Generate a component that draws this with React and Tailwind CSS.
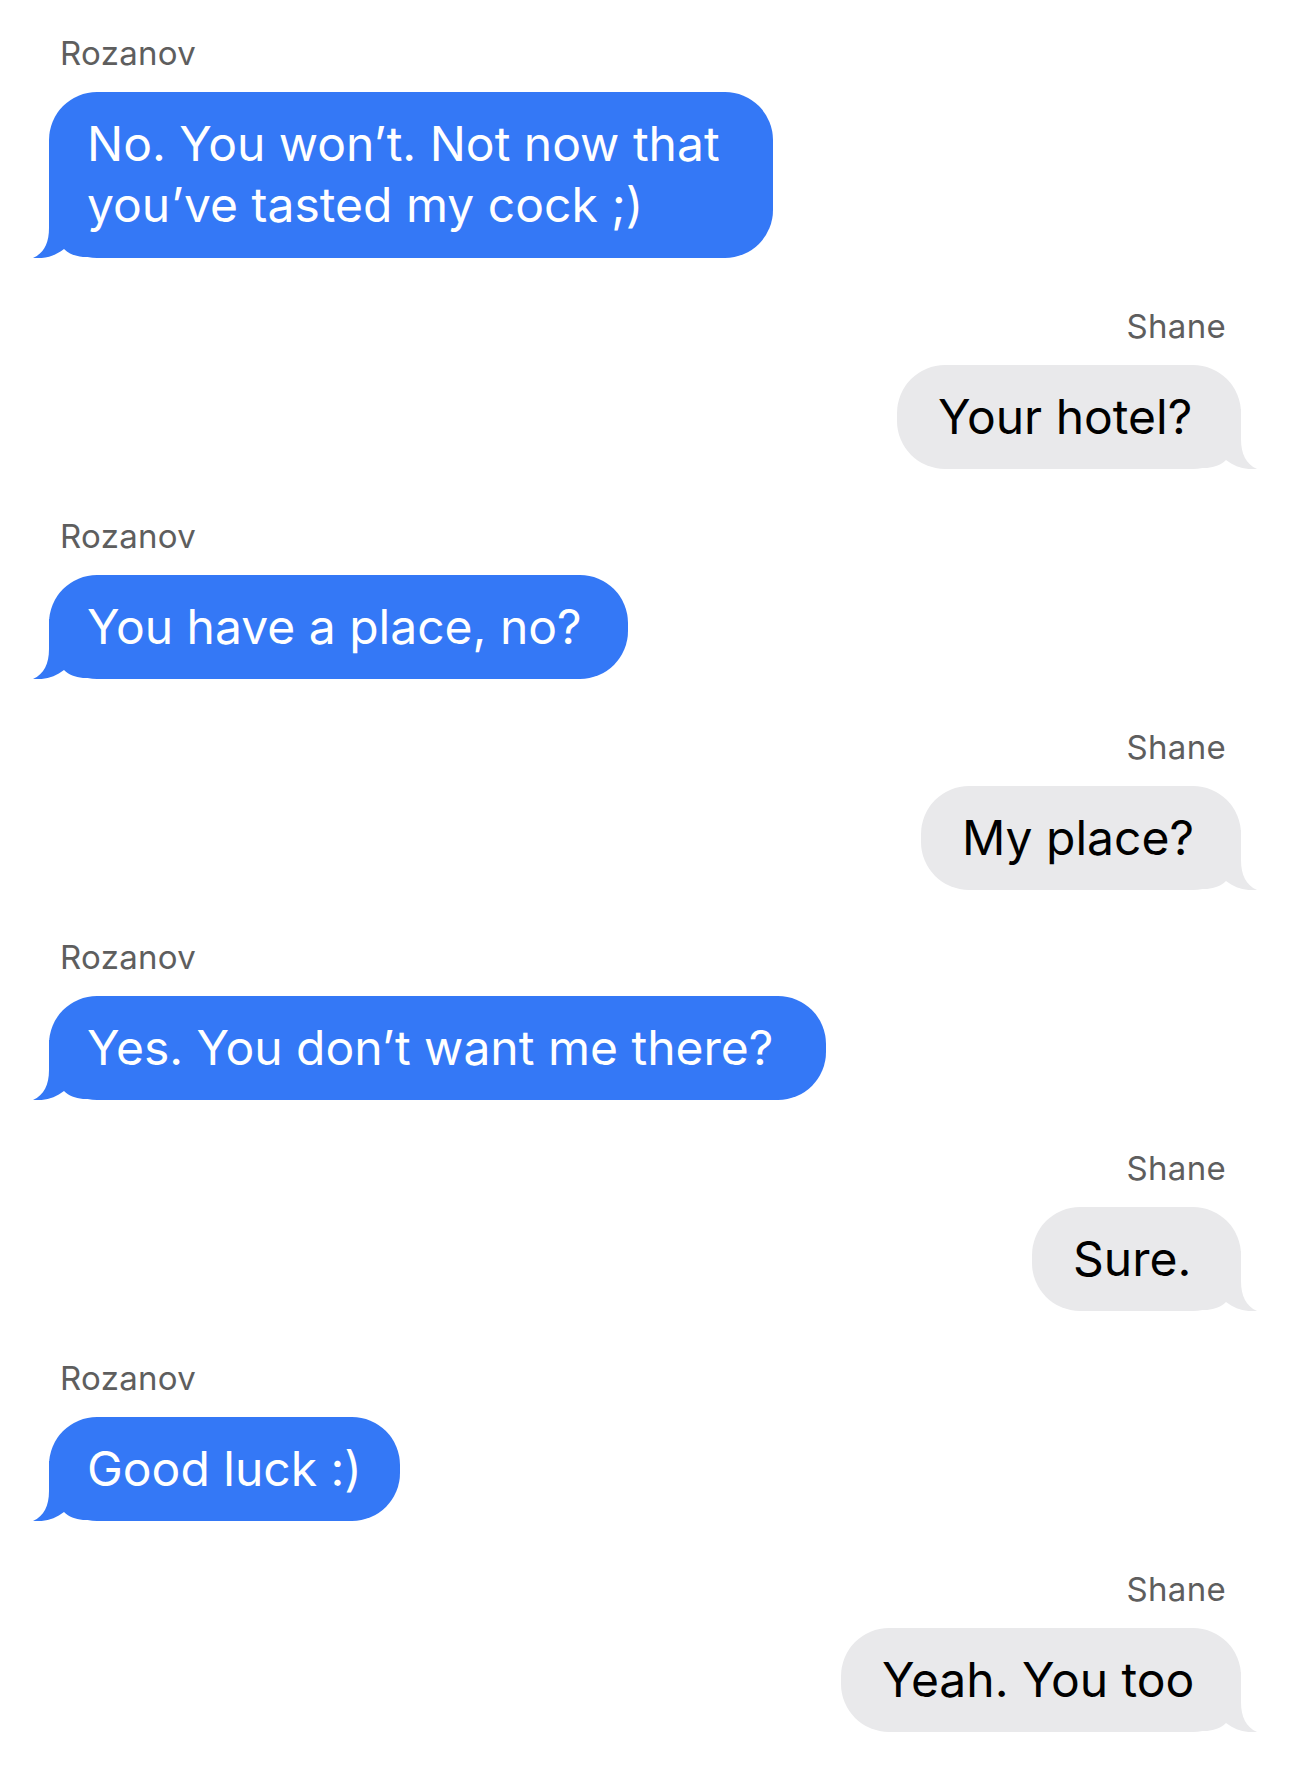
import React from "react";

const font = { fontFamily: "Inter, 'Noto Sans', 'Liberation Sans', sans-serif" };

function Tail({ side, color }) {
  if (side === "left") {
    return (
      <svg
        className="absolute left-[-16px] bottom-0 w-[60px] h-[60px]"
        viewBox="0 0 60 60"
      >
        <path
          d="M16 0 L16 30 C16 45 11 55 0 60 C12 61 22 58 31 51 C36 56 42 58 50 59 L60 59 L60 0 Z"
          fill={color}
        />
      </svg>
    );
  }
  return (
    <svg
      className="absolute right-[-16px] bottom-0 w-[60px] h-[60px]"
      viewBox="0 0 60 60"
    >
      <path
        d="M44 0 L44 30 C44 45 49 55 60 60 C48 61 38 58 29 51 C24 56 18 58 10 59 L0 59 L0 0 Z"
        fill={color}
      />
    </svg>
  );
}

function Group({ who, side, width, lines, first, tall }) {
  const left = side === "left";
  return (
    <div
      className={
        "flex flex-col " +
        (left ? "items-start " : "items-end ") +
        (first ? "" : "mt-[50.5px]")
      }
    >
      <div
        className={
          "text-[33px] leading-[34px] tracking-[0.3px] text-[#5e5e5e] " +
          (left ? "ml-[11px]" : "mr-[15px]")
        }
      >
        {who}
      </div>
      <div
        className={
          "relative mt-[22px] rounded-[48px] whitespace-nowrap text-[48px] leading-[61px] " +
          (left
            ? "bg-[#3478f6] text-white pl-[38px] "
            : "bg-[#e9e9eb] text-black pl-[41px] ") +
          (tall ? "pt-[21px] pb-[23px]" : "pt-[21px] pb-[22px]")
        }
        style={{ width }}
      >
        <Tail side={side} color={left ? "#3478f6" : "#e9e9eb"} />
        <div className="relative">
          {lines.map((l, i) => (
            <div key={i}>{l}</div>
          ))}
        </div>
      </div>
    </div>
  );
}

export default function App() {
  return (
    <div
      className="w-[1290px] min-h-[1781px] bg-white px-[49px] pt-[36px] pb-[49px] flex flex-col"
      style={font}
    >
      <Group
        first
        tall
        who="Rozanov"
        side="left"
        width={724}
        lines={["No. You won’t. Not now that", "you’ve tasted my cock ;)"]}
      />
      <Group who="Shane" side="right" width={344} lines={["Your hotel?"]} />
      <Group
        who="Rozanov"
        side="left"
        width={579}
        lines={["You have a place, no?"]}
      />
      <Group who="Shane" side="right" width={320} lines={["My place?"]} />
      <Group
        who="Rozanov"
        side="left"
        width={777}
        lines={["Yes. You don’t want me there?"]}
      />
      <Group who="Shane" side="right" width={209} lines={["Sure."]} />
      <Group who="Rozanov" side="left" width={351} lines={["Good luck :)"]} />
      <Group who="Shane" side="right" width={400} lines={["Yeah. You too"]} />
    </div>
  );
}
